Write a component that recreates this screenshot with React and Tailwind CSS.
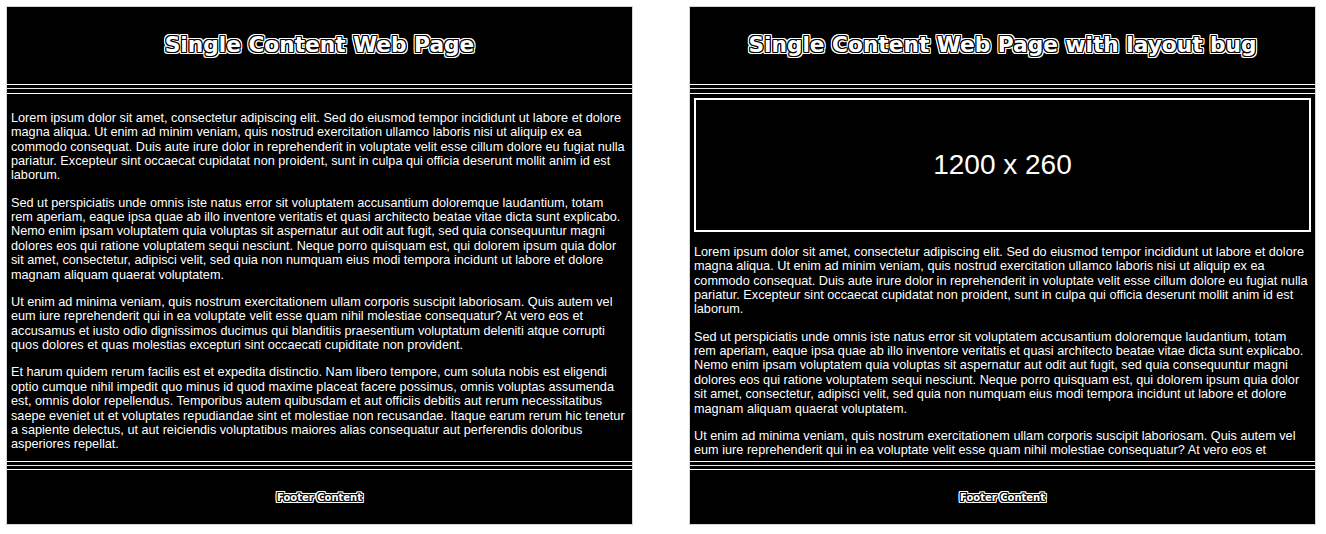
import React from 'react';

const outline =
  '[text-shadow:1px_0_0_#000,-1px_0_0_#000,0_1px_0_#000,0_-1px_0_#000,1px_1px_0_#000,-1px_-1px_0_#000,1px_-1px_0_#000,-1px_1px_0_#000,2px_0_0_#fff,-2px_0_0_#fff,0_2px_0_#fff,0_-2px_0_#fff,2px_2px_0_#fff,-2px_-2px_0_#fff,2px_-2px_0_#fff,-2px_2px_0_#fff,2px_1px_0_#fff,-2px_1px_0_#fff,2px_-1px_0_#fff,-2px_-1px_0_#fff,1px_2px_0_#fff,-1px_2px_0_#fff,1px_-2px_0_#fff,-1px_-2px_0_#fff]';

const paragraphs = [
  'Lorem ipsum dolor sit amet, consectetur adipiscing elit. Sed do eiusmod tempor incididunt ut labore et dolore magna aliqua. Ut enim ad minim veniam, quis nostrud exercitation ullamco laboris nisi ut aliquip ex ea commodo consequat. Duis aute irure dolor in reprehenderit in voluptate velit esse cillum dolore eu fugiat nulla pariatur. Excepteur sint occaecat cupidatat non proident, sunt in culpa qui officia deserunt mollit anim id est laborum.',
  'Sed ut perspiciatis unde omnis iste natus error sit voluptatem accusantium doloremque laudantium, totam rem aperiam, eaque ipsa quae ab illo inventore veritatis et quasi architecto beatae vitae dicta sunt explicabo. Nemo enim ipsam voluptatem quia voluptas sit aspernatur aut odit aut fugit, sed quia consequuntur magni dolores eos qui ratione voluptatem sequi nesciunt. Neque porro quisquam est, qui dolorem ipsum quia dolor sit amet, consectetur, adipisci velit, sed quia non numquam eius modi tempora incidunt ut labore et dolore magnam aliquam quaerat voluptatem.',
  'Ut enim ad minima veniam, quis nostrum exercitationem ullam corporis suscipit laboriosam. Quis autem vel eum iure reprehenderit qui in ea voluptate velit esse quam nihil molestiae consequatur? At vero eos et accusamus et iusto odio dignissimos ducimus qui blanditiis praesentium voluptatum deleniti atque corrupti quos dolores et quas molestias excepturi sint occaecati cupiditate non provident.',
  'Et harum quidem rerum facilis est et expedita distinctio. Nam libero tempore, cum soluta nobis est eligendi optio cumque nihil impedit quo minus id quod maxime placeat facere possimus, omnis voluptas assumenda est, omnis dolor repellendus. Temporibus autem quibusdam et aut officiis debitis aut rerum necessitatibus saepe eveniet ut et voluptates repudiandae sint et molestiae non recusandae. Itaque earum rerum hic tenetur a sapiente delectus, ut aut reiciendis voluptatibus maiores alias consequatur aut perferendis doloribus asperiores repellat.',
];

const Divider = () => (
  <div className="flex flex-col gap-[3px]">
    <div className="h-px bg-white" />
    <div className="h-px bg-gray-200" />
    <div className="h-px bg-white" />
  </div>
);

const Page = ({ title, banner }) => (
  <div className="w-[627px] h-[519px] border border-gray-300 bg-black flex flex-col">
    <header className="h-[78px] border-b border-white flex items-center justify-center">
      <h1 className={`text-[21.7px] font-bold text-white font-['DejaVu_Sans',sans-serif] ${outline}`}>{title}</h1>
    </header>
    <div className="h-[3px]" />
    <div className="flex flex-col gap-[4px]">
      <div className="h-px bg-gray-200" />
      <div className="h-px bg-white" />
    </div>
    <main className="flex-1 min-h-0 flex flex-col px-[4px] pt-[4px] pb-[4px] text-white text-[12.7px] leading-[14.4px] font-['Liberation_Sans',Arial,sans-serif]">
      <div className="flex-1 min-h-0 overflow-hidden">
        {banner && (
          <div className="h-[134px] mb-[2px] border-2 border-white flex items-center justify-center text-[28px] leading-normal">
            1200 x 260
          </div>
        )}
        {paragraphs.map((p, i) => (
          <p key={i} className="my-[12.8px]">{p}</p>
        ))}
      </div>
    </main>
    <Divider />
    <footer className="h-[54px] flex items-center justify-center">
      <span className={`text-[10px] font-bold text-white font-['DejaVu_Sans',sans-serif] ${outline}`}>Footer Content</span>
    </footer>
  </div>
);

export default function App() {
  return (
    <div className="min-h-[534px] bg-white pt-[6px] pl-[6px] flex gap-[56px]">
      <Page title="Single Content Web Page" />
      <Page title="Single Content Web Page with layout bug" banner />
    </div>
  );
}
